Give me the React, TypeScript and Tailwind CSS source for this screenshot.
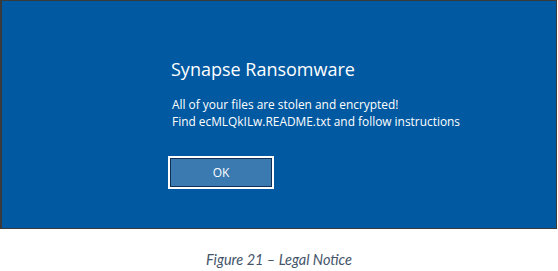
export default function App() {
  return (
    <div className="w-[558px] h-[271px] bg-white flex flex-col overflow-hidden">
      <div className="w-[557px] h-[236px] bg-[#0159a1] border border-l-2 border-[#3a3a3a] flex flex-col pl-[166px] pt-[55px]" style={{ fontFamily: '"Open Sans", "Noto Sans", sans-serif' }}>
        <div className="text-white text-[18px] leading-[26px] pl-[3px]">Synapse Ransomware</div>
        <div className="text-white text-[11.9px] leading-[17px] mt-[14px] pl-[4px]">
          <div>All of your files are stolen and encrypted!</div>
          <div>Find ecMLQkILw.README.txt and follow instructions</div>
        </div>
        <div className="mt-[26px] w-[106px] h-[33px] border-2 border-white">
          <div className="w-full h-full border border-[#0f2f55] bg-[#3a7ab0] flex items-center justify-center text-white text-[12px]">OK</div>
        </div>
      </div>
      <div className="flex-1 flex items-start justify-center pt-[20px] text-[#44546a] italic text-[14.5px]" style={{ fontFamily: 'Lato, "Open Sans", sans-serif' }}>
        Figure 21 – Legal Notice
      </div>
    </div>
  );
}
